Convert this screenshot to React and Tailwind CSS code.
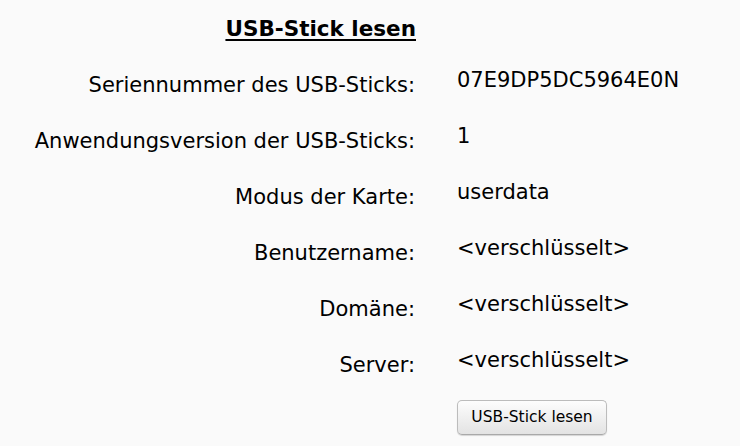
import React from "react";

const rows = [
  ["Seriennummer des USB-Sticks:", "07E9DP5DC5964E0N"],
  ["Anwendungsversion der USB-Sticks:", "1"],
  ["Modus der Karte:", "userdata"],
  ["Benutzername:", "<verschlüsselt>"],
  ["Domäne:", "<verschlüsselt>"],
  ["Server:", "<verschlüsselt>"],
];

export default function App() {
  return (
    <div className="min-h-screen bg-[#fafafa] text-black pt-[12px] font-['DejaVu_Sans',sans-serif] text-[21px] leading-[24px]">
      <div className="flex">
        <h1 className="w-[416px] text-right pt-[5px] text-[21.5px] font-bold underline decoration-2 underline-offset-[3px]">
          USB-Stick lesen
        </h1>
      </div>

      {rows.map(([label, value]) => (
        <div key={label} className="flex items-start mt-[27px]">
          <div className="w-[415px] shrink-0 text-right pt-[5px]">{label}</div>
          <div className="ml-[42px]">{value}</div>
        </div>
      ))}

      <div className="flex mt-[23px]">
        <div className="w-[415px] shrink-0" />
        <button
          type="button"
          className="ml-[42px] w-[150px] h-[35px] rounded-[5px] border border-[#bcbcbc] border-b-[#a9a9a9] bg-gradient-to-b from-[#fdfdfd] to-[#e3e3e3] shadow-[0_1px_1px_rgba(0,0,0,0.15)] text-[15.5px] leading-none text-black"
        >
          USB-Stick lesen
        </button>
      </div>
    </div>
  );
}
